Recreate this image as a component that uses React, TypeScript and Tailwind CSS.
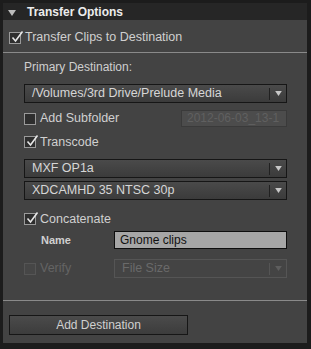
import React from 'react'

const font = { fontFamily: '"Liberation Sans", Arial, sans-serif' }

function Check({ checked, disabled }: { checked?: boolean; disabled?: boolean }) {
  return (
    <span
      className={`relative inline-block w-[12px] h-[12px] shrink-0 border ${
        disabled ? 'border-[#555] bg-[#464646]' : 'border-[#9a9a9a] bg-[#2e2e2e]'
      }`}
    >
      {checked && (
        <svg viewBox="0 0 14 14" className="absolute -top-[3px] left-[0px] w-[14px] h-[14px]">
          <path d="M2.5 7.5 L5.5 11 L12.5 1.5" fill="none" stroke="#e6e6e6" strokeWidth="1.6" />
        </svg>
      )}
    </span>
  )
}

function Select({ label, disabled }: { label: string; disabled?: boolean }) {
  return (
    <div
      className={`flex items-center h-[19px] border ${
        disabled
          ? 'border-[#555] bg-[#444] text-[#6a6a6a]'
          : 'border-[#161616] bg-gradient-to-b from-[#4a4a4a] to-[#3b3b3b] text-[#d6d6d6]'
      }`}
    >
      <span className="flex-1 pl-[7px] text-[12.5px] leading-none truncate">{label}</span>
      <span className={`w-px h-[12px] ${disabled ? 'bg-[#555]' : 'bg-[#202020]'}`} />
      <span className="w-[16px] flex justify-center">
        <svg viewBox="0 0 8 6" className="w-[7px] h-[5px]">
          <path d="M0 0 H8 L4 6 Z" fill={disabled ? '#5e5e5e' : '#c8c8c8'} />
        </svg>
      </span>
    </div>
  )
}

export default function App() {
  return (
    <div style={font} className="w-[311px] h-[349px] bg-[#1c1c1c] pt-[3px] pl-[3px] pr-[4px] pb-[6px]">
      <div className="h-full flex flex-col bg-[#434343]">
        {/* header */}
        <div className="h-[17px] shrink-0 bg-[#262626] flex items-center gap-[11px] pl-[5px]">
          <svg viewBox="0 0 8 6" className="w-[8px] h-[6px] mt-[2px]">
            <path d="M0 0 H8 L4 6 Z" fill="#bdbdbd" />
          </svg>
          <span className="text-[12px] font-bold text-[#ececec]">Transfer Options</span>
        </div>

        <div className="h-[32px] shrink-0 flex items-center gap-[4px] pl-[6px] pt-[3px]">
          <Check checked />
          <span className="text-[12.5px] text-[#d0d0d0]">Transfer Clips to Destination</span>
        </div>
        <div className="h-px shrink-0 bg-[#8a8a8a]" />

        <div className="flex-1 flex flex-col pl-[21px] pr-[20px]">
          <div className="h-[14px] leading-[14px] text-[12px] text-[#cfcfcf] mt-[7px]">Primary Destination:</div>
          <div className="mt-[10px]">
            <Select label="/Volumes/3rd Drive/Prelude Media" />
          </div>
          <div className="flex items-center h-[17px] mt-[7px]">
            <div className="flex items-center gap-[4px] flex-1">
              <Check />
              <span className="text-[12.5px] text-[#d0d0d0]">Add Subfolder</span>
            </div>
            <div className="w-[106px] h-[17px] bg-[#4c4c4c] border border-[#3a3a3a] text-[12px] text-[#606060] pl-[5px] overflow-hidden whitespace-nowrap leading-[15px]">
              2012-06-03_13-1
            </div>
          </div>
          <div className="flex items-center gap-[4px] h-[14px] mt-[8px]">
            <Check checked />
            <span className="text-[12.5px] text-[#d0d0d0]">Transcode</span>
          </div>
          <div className="mt-[10px]">
            <Select label="MXF OP1a" />
          </div>
          <div className="mt-[3px]">
            <Select label="XDCAMHD 35 NTSC 30p" />
          </div>
          <div className="flex items-center gap-[4px] h-[14px] mt-[12px]">
            <Check checked />
            <span className="text-[12.5px] text-[#d0d0d0]">Concatenate</span>
          </div>
          <div className="flex items-center mt-[5px]">
            <span className="w-[90px] pl-[17px] text-[11px] font-bold text-[#d0d0d0]">Name</span>
            <div className="flex-1 h-[18px] bg-[#a6a6a6] border border-[#0e0e0e] text-[12px] text-[#111] pl-[5px] leading-[16px]">
              Gnome clips
            </div>
          </div>
          <div className="flex items-center mt-[10px]">
            <div className="flex items-center gap-[4px] w-[90px]">
              <Check disabled />
              <span className="text-[12.5px] text-[#646464]">Verify</span>
            </div>
            <div className="flex-1">
              <Select label="File Size" disabled />
            </div>
          </div>
        </div>

        <div className="h-px shrink-0 bg-[#8a8a8a]" />
        <div className="h-[42px] shrink-0 pl-[6px] pt-[11px]">
          <button className="w-[179px] h-[20px] border border-[#161616] bg-gradient-to-b from-[#4b4b4b] to-[#3c3c3c] text-[12px] text-[#d0d0d0]">
            Add Destination
          </button>
        </div>
      </div>
    </div>
  )
}
